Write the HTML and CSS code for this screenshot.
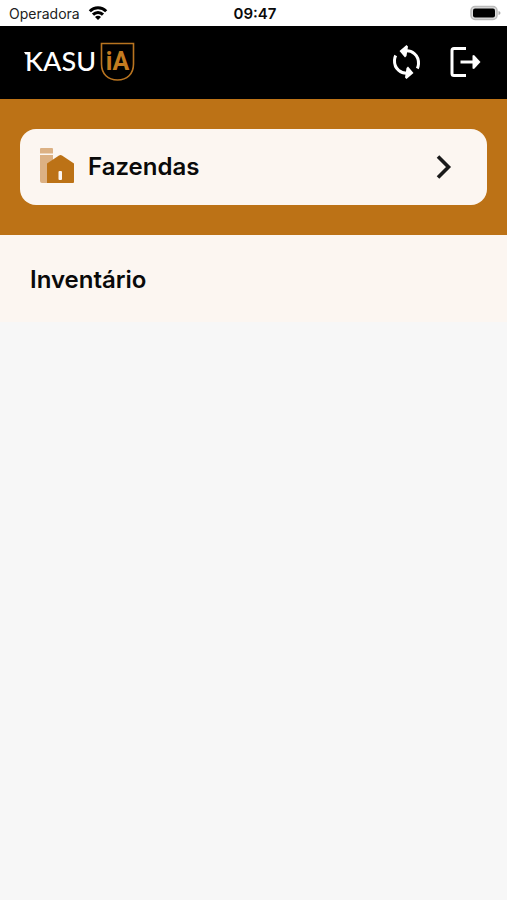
FILE: index.html
```html
<!DOCTYPE html>
<html lang="pt">
<head>
<meta charset="utf-8">
<meta name="viewport" content="width=device-width, initial-scale=1">
<title>Kasu iA</title>
<link rel="stylesheet" href="styles.css">
</head>
<body>
<div class="status">
  <div class="carrier">
    <span>Operadora</span>
    <svg width="20" height="16" viewBox="0 0 20 16" fill="none" stroke="#000" stroke-width="3" aria-hidden="true">
      <path d="M1.8 6.2a11.6 11.6 0 0 1 16.4 0"/>
      <path d="M5 9.6a7 7 0 0 1 10 0"/>
      <path d="M10 15l-3-3a4.2 4.2 0 0 1 6 0z" fill="#000" stroke="none"/>
    </svg>
  </div>
  <time class="clock">09:47</time>
  <svg class="battery" width="31" height="16" viewBox="0 0 31 16" aria-hidden="true">
    <rect x="1" y="1.500" width="26" height="13" rx="4" fill="#ddd" stroke="#bbb" stroke-width="1.5"/>
    <rect x="3" y="3.500" width="22" height="9" rx="2" fill="#000"/>
    <path d="M28.500 6q2 .5 2 2t-2 2z" fill="#aaa"/>
  </svg>
</div>
<header class="bar">
  <div class="logo">
    <svg class="flag" width="5" height="20" viewBox="0 0 5 20" aria-hidden="true"><path d="M0 0h5v2.500H1.500z" fill="#fff"/></svg>
    <span class="word">KASU</span>
    <span class="shield">
      <svg width="35" height="40" viewBox="0 0 35 40" fill="none" stroke="#b87420" stroke-width="1.6" aria-hidden="true">
        <path d="M1.500 1.500h32V22c0 10-6.500 16-16 16s-16-6-16-16z"/>
      </svg>
      <span class="ia">iA</span>
    </span>
  </div>
  <div class="actions">
    <button type="button" aria-label="Sincronizar">
      <svg width="40" height="40" viewBox="0 0 40 40" fill="none" stroke="#fff" stroke-width="3">
        <path d="M16 9.200C25 7 32 13.500 31.500 22q-.2 2.500-1.200 4.500"/>
        <path d="M23 30.800C14 33 7 26.500 7.500 18q.2-2.500 1.200-4.500"/>
        <path d="M19.500 3l1.500 1.500-1.500 9.500-1.500 1.500L12.500 9zM19.500 37L18 35.500l1.500-9.500 1.500-1.500 5.500 6.500z" fill="#fff" stroke="none"/>
      </svg>
    </button>
    <button type="button" aria-label="Sair">
      <svg width="40" height="40" viewBox="0 0 40 40" fill="none" stroke="#fff" stroke-width="3">
        <path d="M21 6.500H9a2 2 0 0 0-2 2v23a2 2 0 0 0 2 2h12"/>
        <path d="M15.500 20H33"/>
        <path d="M27.500 13.500L29 13l6.500 7-6.500 7-1.500-.5z" fill="#fff" stroke="none"/>
      </svg>
    </button>
  </div>
</header>
<main>
  <section class="band">
    <a class="card" href="#fazendas">
      <svg class="farm" width="36" height="38" viewBox="0 0 36 38" aria-hidden="true">
        <path d="M2 0h11a1 1 0 0 1 1 1v4.500H1V1a1 1 0 0 1 1-1zM1 7h13v28H3a2 2 0 0 1-2-2z" fill="#dcb184"/>
        <path d="M8 15.500L20 7.500q1.500-1 3 0L35 15.500V34a1 1 0 0 1-1 1H8z" fill="#bc7216"/>
        <rect x="19.500" y="23" width="3.500" height="9" rx="1" fill="#fcf6f1"/>
      </svg>
      <span class="label">Fazendas</span>
      <svg class="chevron" width="20" height="28" viewBox="0 0 20 28" fill="none" stroke="#1a1a1a" stroke-width="3.600" aria-hidden="true"><path d="M3 3.500L13.500 14 3 24.500"/></svg>
    </a>
  </section>
  <section class="inventory"><h1>Inventário</h1></section>
</main>
</body>
</html>
```
FILE: styles.css
```css
* { box-sizing: border-box; }
body {
  margin: 0;
  min-height: 100vh;
  background: #f7f7f7;
  color: #0a0a0a;
  font-family: "Liberation Sans", sans-serif;
}
.status {
  display: grid;
  grid-template-columns: 1fr auto 1fr;
  align-items: center;
  height: 26px;
  padding: 0 6px 0 9px;
  background: #fff;
  font-family: Inter, sans-serif;
  font-size: 14px;
}
.carrier { display: flex; align-items: center; gap: 8px; color: #222; }
.clock { font-size: 15px; font-weight: 600; }
.battery { justify-self: end; }
.bar {
  display: flex;
  justify-content: space-between;
  align-items: center;
  padding: 16px 22px 17px 24px;
  background: #000;
}
.logo { display: flex; align-items: center; color: #fff; }
.flag { margin-right: -4px; }
.word { font: 500 27px/36px Lato, sans-serif; padding-bottom: 2px; }
.shield {
  display: grid;
  place-items: center;
  margin-left: 4px;
}
.shield > * { grid-area: 1 / 1; }
.ia { color: #c47c20; font: 700 25px/36px Roboto, sans-serif; }
.actions { display: flex; gap: 18px; }
button { display: flex; padding: 0; border: 0; background: none; cursor: pointer; }
.band { padding: 30px 20px; background: #bc7216; }
.card {
  display: flex;
  align-items: center;
  gap: 13px;
  height: 76px;
  padding: 0 32px 0 19px;
  border-radius: 16px;
  background: #fcf6f1;
  color: inherit;
  text-decoration: none;
}
.label, h1 { font: 600 24px/32px Inter, sans-serif; }
.chevron { margin-left: auto; }
.inventory { padding: 29px 30px 26px; background: #fcf6f1; }
h1 { margin: 0; }
```
